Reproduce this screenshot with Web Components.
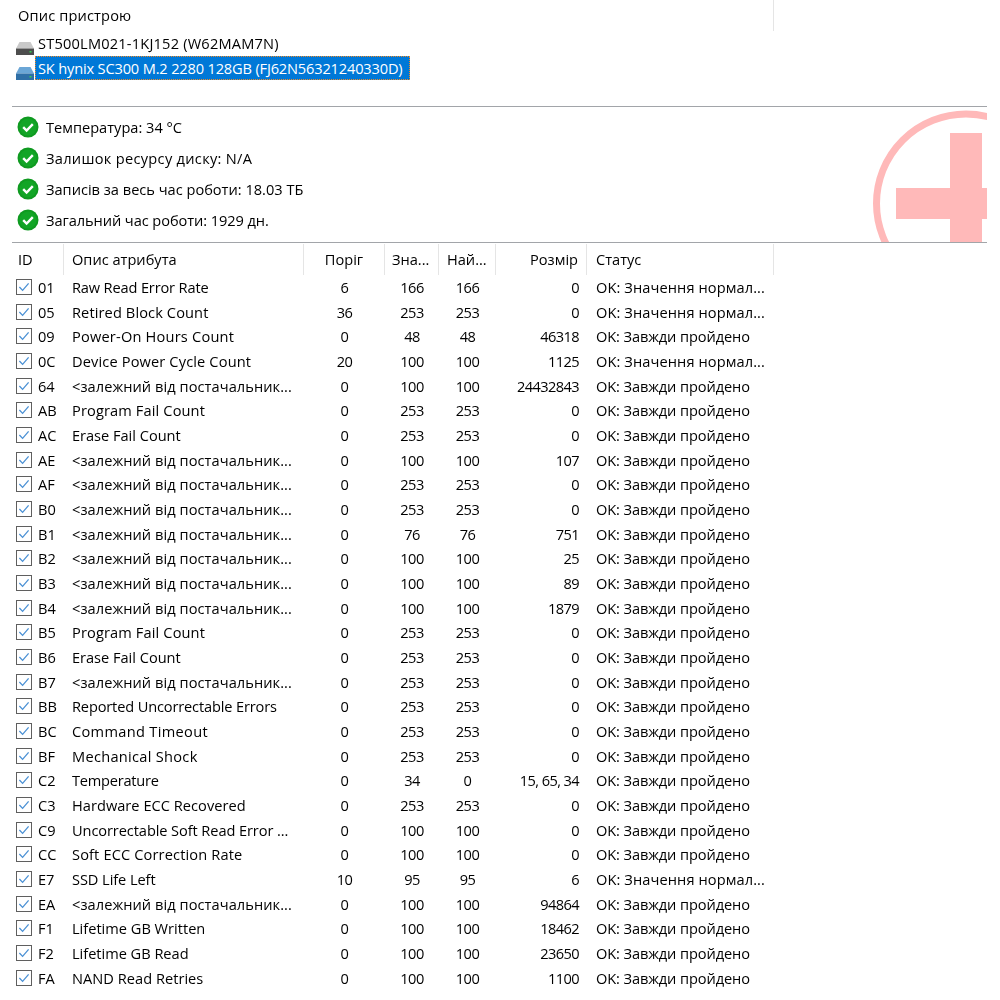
<!DOCTYPE html>
<html lang="uk">
<head>
<meta charset="utf-8">
<title>Опис пристрою</title>
<style>
  html, body { margin: 0; background: #fff; height: 1000px; overflow: hidden; }
  body { font: 14.6px "Open Sans", "Noto Sans", sans-serif; color: #000; }
</style>
</head>
<body>
<smart-app></smart-app>

<script>
const COLS = "52px 240px 81px 54px 57px 91px 187px";

const ROWS = [
  ["01", "Raw Read Error Rate", 6, 166, 166, "0", 1],
  ["05", "Retired Block Count", 36, 253, 253, "0", 1],
  ["09", "Power-On Hours Count", 0, 48, 48, "46318", 0],
  ["0C", "Device Power Cycle Count", 20, 100, 100, "1125", 1],
  ["64", "<залежний від постачальник...", 0, 100, 100, "24432843", 0],
  ["AB", "Program Fail Count", 0, 253, 253, "0", 0],
  ["AC", "Erase Fail Count", 0, 253, 253, "0", 0],
  ["AE", "<залежний від постачальник...", 0, 100, 100, "107", 0],
  ["AF", "<залежний від постачальник...", 0, 253, 253, "0", 0],
  ["B0", "<залежний від постачальник...", 0, 253, 253, "0", 0],
  ["B1", "<залежний від постачальник...", 0, 76, 76, "751", 0],
  ["B2", "<залежний від постачальник...", 0, 100, 100, "25", 0],
  ["B3", "<залежний від постачальник...", 0, 100, 100, "89", 0],
  ["B4", "<залежний від постачальник...", 0, 100, 100, "1879", 0],
  ["B5", "Program Fail Count", 0, 253, 253, "0", 0],
  ["B6", "Erase Fail Count", 0, 253, 253, "0", 0],
  ["B7", "<залежний від постачальник...", 0, 253, 253, "0", 0],
  ["BB", "Reported Uncorrectable Errors", 0, 253, 253, "0", 0],
  ["BC", "Command Timeout", 0, 253, 253, "0", 0],
  ["BF", "Mechanical Shock", 0, 253, 253, "0", 0],
  ["C2", "Temperature", 0, 34, 0, "15, 65, 34", 0],
  ["C3", "Hardware ECC Recovered", 0, 253, 253, "0", 0],
  ["C9", "Uncorrectable Soft Read Error ...", 0, 100, 100, "0", 0],
  ["CC", "Soft ECC Correction Rate", 0, 100, 100, "0", 0],
  ["E7", "SSD Life Left", 10, 95, 95, "6", 1],
  ["EA", "<залежний від постачальник...", 0, 100, 100, "94864", 0],
  ["F1", "Lifetime GB Written", 0, 100, 100, "18462", 0],
  ["F2", "Lifetime GB Read", 0, 100, 100, "23650", 0],
  ["FA", "NAND Read Retries", 0, 100, 100, "1100", 0],
];

// this font isn't the original one, so nudge the names to the reference widths
const NAME_SPACING = {
  "Raw Read Error Rate": -0.15,
  "Retired Block Count": 0.11,
  "Power-On Hours Count": 0.2,
  "Device Power Cycle Count": 0.14,
  "Program Fail Count": 0.13,
  "Erase Fail Count": -0.02,
  "Reported Uncorrectable Errors": -0.15,
  "Command Timeout": 0.32,
  "Mechanical Shock": 0.29,
  "Temperature": -0.24,
  "Hardware ECC Recovered": 0.03,
  "Uncorrectable Soft Read Error ...": -0.09,
  "Soft ECC Correction Rate": 0.14,
  "SSD Life Left": -0.07,
  "Lifetime GB Written": 0,
  "Lifetime GB Read": -0.02,
  "NAND Read Retries": 0.03,
};

const esc = (s) => String(s).replace(/&/g, "&amp;").replace(/</g, "&lt;");

class DriveItem extends HTMLElement {
  constructor() {
    super();
    this.attachShadow({ mode: "open" });
    const sel = this.hasAttribute("selected");
    const top = sel ? "#6ba6d6" : "#c9c9c9";
    const base = sel ? "#2f6fa6" : "#4d4d4d";
    this.shadowRoot.innerHTML = `
    <style>
      :host { display: flex; align-items: center; height: 24.7px; padding-left: 4px; }
      svg { flex: none; width: 18px; height: 13px; margin-top: 10px; }
      span { margin-left: 1px; padding: 0 8px 0 3px; line-height: 24px; white-space: nowrap; }
      :host([selected]) span {
        background: #0078d7; color: #fff; outline: 1px dotted #f08a24; outline-offset: -1px;
      }
    </style>
    <svg viewBox="0 0 18 13">
      <path d="M3.5 0h11L18 6.5H0z" fill="${top}"/>
      <path d="M0 6.5h18V13H0z" fill="${base}"/>
      <rect x="13.5" y="9" width="2" height="1.5" fill="#35d04f"/>
    </svg>
    <span><slot></slot></span>
    `;
  }
}

class DevicePanel extends HTMLElement {
  constructor() {
    super();
    this.attachShadow({ mode: "open" });
    this.shadowRoot.innerHTML = `
    <style>
      :host { display: block; height: 106px; margin-left: 12px; width: 975px; border-bottom: 1px solid #a2a5a9; }
      .head { display: flex; height: 31px; }
      .head div { width: 762px; padding-left: 6px; box-sizing: border-box; line-height: 30px; border-right: 1px solid #e5e5e5; letter-spacing: .15px; }
    </style>
    <div class="head"><div>Опис пристрою</div></div>
    <slot></slot>
    `;
  }
}

class StatusLine extends HTMLElement {
  constructor() {
    super();
    this.attachShadow({ mode: "open" });
    this.shadowRoot.innerHTML = `
    <style>
      :host { display: flex; align-items: center; gap: 7px; height: 31px; }
      svg { width: 22px; height: 22px; flex: none; }
    </style>
    <svg viewBox="0 0 22 22">
      <circle cx="11" cy="11" r="10.5" fill="#0f9a20"/>
      <circle cx="11" cy="11" r="8.6" fill="#12a526"/>
      <path d="M6.2 11.2l3.4 3.4 6.2-6.4" fill="none" stroke="#fff" stroke-width="2.4"/>
    </svg>
    <span><slot></slot></span>
    `;
  }
}

class StatusPanel extends HTMLElement {
  constructor() {
    super();
    this.attachShadow({ mode: "open" });
    this.shadowRoot.innerHTML = `
    <style>
      :host {
        display: block; position: relative; overflow: hidden;
        margin-left: 12px; width: 975px; height: 136px; box-sizing: border-box;
        padding: 4px 0 0 5px; border-bottom: 1px solid #a2a5a9;
      }
      svg { position: absolute; left: 0; top: 0; width: 975px; height: 135px; }
      .list { position: relative; }
    </style>
    <svg viewBox="0 0 975 135">
      <circle cx="954" cy="96.5" r="89.5" fill="none" stroke="#ffb9b9" stroke-width="7"/>
      <rect x="938" y="26" width="32" height="109" fill="#ffb9b9"/>
      <rect x="884" y="81" width="91" height="31" fill="#ffb9b9"/>
    </svg>
    <div class="list"><slot></slot></div>
    `;
  }
}

class AttrHeader extends HTMLElement {
  constructor() {
    super();
    this.attachShadow({ mode: "open" });
    const labels = [
      ["ID", "padding-left:6px"],
      ["Опис атрибута", "padding-left:8px"],
      ["Поріг", "text-align:center"],
      ["Зна...", "padding-left:7px"],
      ["Най...", "padding-left:8px"],
      ["Розмір", "text-align:right;padding-right:8px"],
      ["Статус", "padding-left:9px"],
    ];
    this.shadowRoot.innerHTML = `
    <style>
      :host { display: grid; grid-template-columns: ${COLS}; height: 31.7px; margin-left: 12px; padding-top: 1px; box-sizing: border-box; }
      div { border-right: 1px solid #e5e5e5; box-sizing: border-box; line-height: 30px; white-space: nowrap; overflow: hidden; }
    </style>
    ${labels.map(([t, s]) => `<div style="${s}">${t}</div>`).join("")}
    `;
  }
}

class AttrRow extends HTMLElement {
  constructor() {
    super();
    this.attachShadow({ mode: "open" });
  }
  set row(r) {
    const [id, name, limit, val, worst, raw, normal] = r;
    const status = normal ? "OK: Значення нормал..." : "OK: Завжди пройдено";
    const spacing = name in NAME_SPACING ? NAME_SPACING[name] : 0.07;
    this.shadowRoot.innerHTML = `
    <style>
      :host { display: grid; grid-template-columns: ${COLS}; height: 24.68px; margin-left: 12px; align-items: center; white-space: nowrap; }
      .id { display: flex; align-items: center; gap: 6px; padding-left: 4px; }
      svg { width: 16px; height: 16px; flex: none; }
      .name { padding-left: 8px; letter-spacing: ${spacing}px; }
      .c { text-align: center; letter-spacing: -.5px; }
      .r { text-align: right; padding-right: 8px; letter-spacing: -.6px; }
      .s { padding-left: 9px; letter-spacing: ${normal ? ".1px" : "-.1px"}; }
    </style>
    <div class="id">
      <svg viewBox="0 0 16 16">
        <rect x=".5" y=".5" width="15" height="15" fill="#fff" stroke="#5f5f5f"/>
        <path d="M3.4 8l3.2 3.4 6-7" fill="none" stroke="#4a90d4" stroke-width="1.3"/>
      </svg>
      <span>${id}</span>
    </div>
    <div class="name">${esc(name)}</div>
    <div class="c">${limit}</div>
    <div class="c">${val}</div>
    <div class="c">${worst}</div>
    <div class="r">${raw}</div>
    <div class="s">${status}</div>
    `;
  }
}

class AttrTable extends HTMLElement {
  constructor() {
    super();
    this.attachShadow({ mode: "open" });
    this.shadowRoot.innerHTML = `
    <style>:host { display: block; }</style>
    <attr-header></attr-header>
    <div id="rows"></div>
    `;
  }
  connectedCallback() {
    const box = this.shadowRoot.getElementById("rows");
    ROWS.forEach((r) => {
      const el = document.createElement("attr-row");
      el.row = r;
      box.appendChild(el);
    });
  }
}

class SmartApp extends HTMLElement {
  constructor() {
    super();
    this.attachShadow({ mode: "open" });
    this.shadowRoot.innerHTML = `
    <style>
      :host { display: block; filter: blur(.3px); }
    </style>
    <device-panel>
      <drive-item style="letter-spacing:.2px">ST500LM021-1KJ152 (W62MAM7N)</drive-item>
      <drive-item selected style="letter-spacing:-.16px">SK hynix SC300 M.2 2280 128GB (FJ62N56321240330D)</drive-item>
    </device-panel>
    <status-panel>
      <status-line>Температура: 34 °C</status-line>
      <status-line style="letter-spacing:.3px">Залишок ресурсу диску: N/A</status-line>
      <status-line>Записів за весь час роботи: 18.03 ТБ</status-line>
      <status-line style="letter-spacing:-.07px">Загальний час роботи: 1929 дн.</status-line>
    </status-panel>
    <attr-table></attr-table>
    `;
  }
}

customElements.define("drive-item", DriveItem);
customElements.define("device-panel", DevicePanel);
customElements.define("status-line", StatusLine);
customElements.define("status-panel", StatusPanel);
customElements.define("attr-header", AttrHeader);
customElements.define("attr-row", AttrRow);
customElements.define("attr-table", AttrTable);
customElements.define("smart-app", SmartApp);
</script>
</body>
</html>
